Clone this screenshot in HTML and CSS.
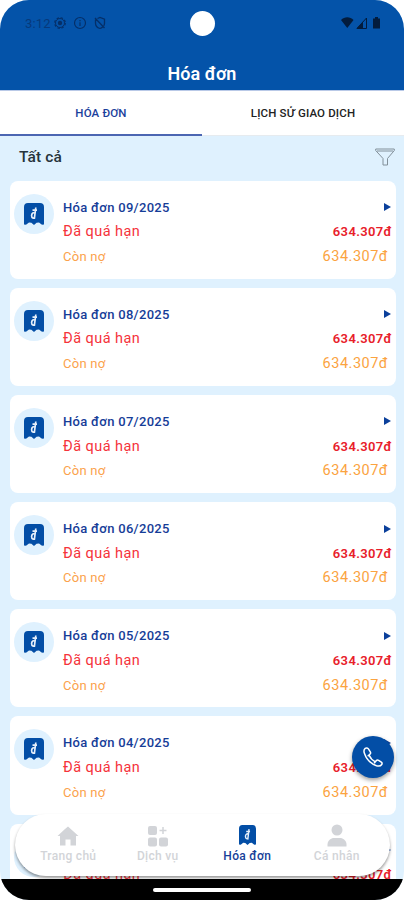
FILE: index.html
```html
<!DOCTYPE html>
<html lang="vi">
<head>
<meta charset="utf-8">
<title>Hóa đơn</title>
<link rel="stylesheet" href="styles.css">
</head>
<body>
<svg class="defs" width="0" height="0" aria-hidden="true">
  <symbol id="bill" viewBox="0 0 20 22">
    <path fill="#034ea6" d="M0 4a4 4 0 0 1 4-4h12a4 4 0 0 1 4 4v17.500l-2 .3-3-2.300-2.400.2L10 22l-2.600-2.300-2.400-.2-3 2.300-2-.3z"/>
    <path fill="none" stroke="#e6effa" stroke-width="1.700" d="M11.800 4.500 10.300 16M8.500 7.200h4.500M11 10.300c-1.300-1.200-3.300-.3-3.400 2.200 0 2.800 2.200 3.300 3.200 1.500"/>
  </symbol>
</svg>
<div class="phone">
  <header class="top">
    <div class="status">
      <span class="clock">3:12</span>
      <svg class="ind" viewBox="0 0 14 14"><circle cx="7" cy="7" r="5.300" fill="none" stroke="currentColor" stroke-width="1.200" stroke-dasharray="2.400 1.760"/><circle cx="7" cy="7" r="4.500" fill="none" stroke="currentColor"/><circle cx="7" cy="7" r="2.200" fill="currentColor"/></svg>
      <svg class="ind" viewBox="0 0 14 14"><circle cx="7" cy="7" r="5.500" fill="none" stroke="currentColor" stroke-width="1.200"/><path d="M7 6.300v3.700M7 4v1.200" stroke="currentColor" stroke-width="1.200"/></svg>
      <svg class="ind" viewBox="0 0 14 14"><path d="M4.500 2.500 7 1.500l4.500 1.700v4c0 1-.3 1.800-.8 2.600M2.500 3.500v3.700c0 2.600 2 4.500 4.500 5.300 1-.3 1.900-.8 2.700-1.500M2 2l9.500 10" fill="none" stroke="currentColor" stroke-width="1.300"/></svg>
      <span class="camera"></span>
      <svg class="signals" viewBox="0 0 40 14"><path d="M0 4c3.500-3.600 9-3.600 12.500 0L6.250 12z" fill="currentColor"/><path d="M25.500 2v10.500H16z" fill="none" stroke="currentColor" stroke-width="1"/><path d="M22 5.500v7h-6.500z" fill="currentColor"/><path d="M32 2.500h2V1h3v1.500h2v10h-7z" fill="currentColor"/></svg>
    </div>
    <h1>Hóa đơn</h1>
  </header>
  <nav class="tabs">
    <span class="tab active"><b>HÓA ĐƠN</b></span>
    <span class="tab"><b>LỊCH SỬ GIAO DỊCH</b></span>
  </nav>
  <div class="filter">
    <span>Tất cả</span>
    <svg width="20" height="18" viewBox="0 0 20 18"><path d="M.7 1h18.600v1.500L12.500 10.500v6.500h-4.500v-6.500L.7 2.500zM2 3h16" fill="none" stroke="#82909a" stroke-width="1"/></svg>
  </div>
  <main class="list" id="list"></main>
  <button class="call" aria-label="Gọi"><svg width="20" height="20" viewBox="0 0 20 20"><path d="M2.200 1.400C.9 2.400.7 4.300 1.400 6.300 3.200 11.800 8 16.700 13.500 18.700c1.900.6 4.200.4 5.200-1.200.6-.9.300-1.800-.4-2.300l-2.700-1.800c-.9-.6-1.800-.4-2.400.3l-.9 1.100C9.700 13.500 7.200 10.800 6 8l.9-.8c.7-.6.9-1.500.4-2.400L5.400 1.900C4.700.9 3.200.6 2.200 1.400zM6 8 4.700 9.200M12.300 14.800l-1.100 1.500" fill="none" stroke="#fff" stroke-width="1.500"/></svg></button>
  <footer class="dock">
    <a class="item home"><svg width="22" height="20" viewBox="0 0 22 20"><path d="M11 .5 21.500 10H19v9.500h-5.500v-6h-5v6H3V10H.5L8 3z" fill="currentColor"/></svg><span>Trang chủ</span></a>
    <a class="item service"><svg width="22" height="22" viewBox="0 0 22 22"><g fill="currentColor"><rect x="1" y="1" width="9" height="9" rx="2"/><rect x="1" y="12.500" width="9" height="9" rx="2"/><rect x="12" y="12.500" width="9" height="9" rx="2"/></g><path d="M16 2v7M12.500 5.500h7" stroke="currentColor" stroke-width="1.500"/></svg><span>Dịch vụ</span></a>
    <a class="item invoice"><svg width="17" height="20" viewBox="0 0 20 22" preserveAspectRatio="none"><use href="#bill"/></svg><span>Hóa đơn</span></a>
    <a class="item person"><svg width="20" height="23" viewBox="0 0 20 23"><circle cx="10" cy="6" r="5.500" fill="currentColor"/><path d="M.5 22.500v-2c0-4 3.500-6.500 6.500-6.500h6c3 0 6.500 2.500 6.500 6.500v2z" fill="currentColor"/></svg><span>Cá nhân</span></a>
  </footer>
  <div class="system"><span></span></div>
</div>
<script src="bills.js"></script>
</body>
</html>
```
FILE: styles.css
```css
* { box-sizing: border-box; }
body { margin: 0; background: #fff; font-family: Roboto, "Liberation Sans", sans-serif; }
.defs { position: absolute; }
.phone { position: relative; width: 404px; height: 900px; overflow: hidden; border-radius: 29px; background: #dff1fe; display: flex; flex-direction: column; }
.top { flex: 0 0 90px; background: #0453a9; color: #fff; }
.status { position: relative; height: 46px; padding: 0 22px 0 25px; display: flex; align-items: center; color: #052f68; }
.clock { width: 28px; font-size: 13px; letter-spacing: .2px; color: #07397b; }
.ind { width: 14px; height: 14px; margin-right: 6px; }
.signals { width: 40px; height: 14px; margin-left: auto; margin-right: 1px; color: #031c3d; }
.camera { position: absolute; left: 190px; top: 11px; width: 25px; height: 25px; border-radius: 50%; background: #fff; }
h1 { margin: 17px 0 0; font-size: 18px; line-height: 22px; font-weight: 600; text-align: center; }
.tabs { flex: 0 0 46px; display: flex; background: #fff; border-top: 1px solid #b9c9e7; }
.tab { flex: 1; display: flex; align-items: center; justify-content: center; border-bottom: 1px solid #e6ebef; color: #222; }
.tab.active { color: #1b3f9c; border-bottom: 2px solid #4c66b2; }
.tab b { font-size: 11.500px; font-weight: 500; letter-spacing: .15px; }
.filter { flex: 0 0 44.500px; display: flex; justify-content: space-between; align-items: center; padding: 0 9px 3px 19px; font-size: 15.500px; font-weight: 500; letter-spacing: .1px; color: #26333b; }
.list { flex: 1; overflow: hidden; padding: 0 8px 0 9.500px; display: flex; flex-direction: column; gap: 9px; }
.card { flex: 0 0 98.200px; background: #fff; border-radius: 8px; padding: 13px 4px 0 4px; display: flex; }
.badge { width: 40px; height: 40px; border-radius: 50%; background: #dff1fe; display: flex; align-items: center; justify-content: center; }
.lines { flex: 1; margin-left: 9.500px; }
.row { height: 24.500px; display: flex; justify-content: space-between; align-items: center; white-space: nowrap; }
.row.first { height: 27px; margin-bottom: -1px; }
.name { font-size: 13px; font-weight: 500; letter-spacing: .3px; color: #163d98; }
.arrow { width: 0; height: 0; border: solid transparent; border-width: 4.500px 0 4.500px 7px; border-left-color: #0b409b; margin-right: 1px; }
.late { font-size: 14.500px; letter-spacing: .45px; color: #f5333b; }
.sum { font-size: 13px; font-weight: 600; letter-spacing: .35px; color: #e8202a; }
.owe { font-size: 13px; letter-spacing: .25px; color: #fba24c; }
.rest { font-size: 14.500px; letter-spacing: .5px; margin-right: 4px; color: #fba33f; }
.call { position: absolute; left: 352px; top: 736px; width: 42px; height: 42px; padding: 0; border: 0; border-radius: 50%; background: #034ea6; box-shadow: 0 2px 4px #0006; display: flex; align-items: center; justify-content: center; }
.dock { position: absolute; left: 15px; top: 814px; width: 375px; height: 62px; border-radius: 31px; background: #fff; box-shadow: 0 2px 3px #0006; display: grid; grid-template-columns: repeat(4, 89.500px); justify-content: center; color: #d2d4d8; }
.item { display: flex; flex-direction: column; align-items: center; justify-content: flex-end; padding-bottom: 13px; }
.item span { margin-top: 2px; font-size: 12px; line-height: 14px; font-weight: 500; letter-spacing: .3px; }
.item.home span { margin-top: 3px; }
.item.invoice { color: #173f99; }
.item.invoice span { margin-top: 4px; }
.system { flex: 0 0 21px; background: #000; display: flex; justify-content: center; padding-top: 9px; z-index: 2; }
.system span { width: 98px; height: 3.500px; border-radius: 2px; background: #fff; }
```
FILE: bills.js
```js
const months = ["09", "08", "07", "06", "05", "04", "03"];
document.getElementById("list").innerHTML = months.map(month => `
  <article class="card">
    <div class="badge"><svg width="20" height="22"><use href="#bill"/></svg></div>
    <div class="lines">
      <div class="row first"><span class="name">Hóa đơn ${month}/2025</span><i class="arrow"></i></div>
      <div class="row"><span class="late">Đã quá hạn</span><span class="sum">634.307đ</span></div>
      <div class="row"><span class="owe">Còn nợ</span><span class="rest">634.307đ</span></div>
    </div>
  </article>`).join("");
```
